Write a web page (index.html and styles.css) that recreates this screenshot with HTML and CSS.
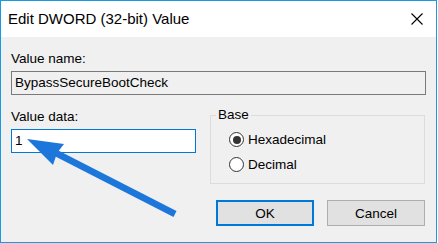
FILE: index.html
```html
<!DOCTYPE html>
<html>
<head>
<meta charset="utf-8">
<link rel="stylesheet" href="styles.css">
</head>
<body>
<div class="window">
  <div class="titlebar">
    <span class="title">Edit DWORD (32-bit) Value</span>
    <svg class="close" width="12" height="12" viewBox="0 0 12 12"><path d="M0.5 0.5 L11.5 11.5 M11.5 0.5 L0.5 11.5" stroke="#000" stroke-width="1.1" fill="none"/></svg>
  </div>
  <div class="content">
    <div class="label first">Value name:</div>
    <div class="textbox readonly">BypassSecureBootCheck</div>
    <div class="row">
      <div class="leftcol">
        <div class="label">Value data:</div>
        <div class="textbox active">1</div>
      </div>
      <fieldset class="group">
        <legend>Base</legend>
        <div class="radio"><span class="circle checked"></span><span>Hexadecimal</span></div>
        <div class="radio"><span class="circle"></span><span>Decimal</span></div>
      </fieldset>
    </div>
    <div class="buttons">
      <div class="btn default">OK</div>
      <div class="btn">Cancel</div>
    </div>
  </div>
  <svg class="arrow" width="438" height="243" viewBox="0 0 438 243">
    <polygon points="27,139 64,144 57,153 53,165" fill="#1d76d9"/>
    <line x1="52" y1="151" x2="175" y2="214" stroke="#1d76d9" stroke-width="6.5"/>
  </svg>
</div>
</body>
</html>
```
FILE: styles.css
```css
html, body {
  margin: 0;
  padding: 0;
  background: #ffffff;
}
body {
  font-family: "Liberation Sans", Arial, sans-serif;
  font-size: 13.5px;
  color: #000;
}
.window {
  position: relative;
  width: 437px;
  height: 243px;
  box-sizing: border-box;
  border: 1px solid #1c9ae0;
  background: #f0f0f0;
  display: flex;
  flex-direction: column;
}
.titlebar {
  height: 36px;
  background: #ffffff;
  display: flex;
  align-items: center;
  justify-content: space-between;
  padding-left: 7px;
  flex: none;
}
.title {
  font-size: 15px;
  line-height: 36px;
}
.close {
  margin-right: 13px;
}
.content {
  padding: 0 10px 0 10px;
  display: flex;
  flex-direction: column;
}
.label {
  line-height: 15px;
}
.label.first {
  margin-top: 14px;
}
.textbox {
  box-sizing: border-box;
  height: 24px;
  line-height: 22px;
  padding-left: 3px;
  margin-top: 5px;
  border: 1px solid #7a7a7a;
}
.textbox.readonly {
  background: #f0f0f0;
}
.textbox.active {
  background: #ffffff;
  border-color: #0078d7;
}
.row {
  display: flex;
  gap: 14px;
  margin-top: 14px;
}
.leftcol {
  width: 185px;
  display: flex;
  flex-direction: column;
}
.group {
  margin: -1px 0 0 0;
  padding: 10px 0 11px 18px;
  border: 1px solid #dcdcdc;
  width: 215px;
  box-sizing: border-box;
  display: flex;
  flex-direction: column;
  gap: 10px;
  min-inline-size: 0;
}
.group legend {
  padding: 0 2px;
  margin-left: -13px;
  line-height: 14px;
}
.radio {
  display: flex;
  align-items: center;
  height: 15px;
  line-height: 15px;
  gap: 4px;
}
.circle {
  width: 15px;
  height: 15px;
  box-sizing: border-box;
  border: 1px solid #333333;
  border-radius: 50%;
  background: #ffffff;
  display: flex;
  align-items: center;
  justify-content: center;
}
.circle.checked::after {
  content: "";
  width: 8px;
  height: 8px;
  border-radius: 50%;
  background: #333333;
}
.buttons {
  display: flex;
  justify-content: flex-end;
  gap: 13px;
  margin-top: 16px;
  margin-right: 1px;
}
.btn {
  width: 98px;
  height: 26px;
  box-sizing: border-box;
  border: 1px solid #adadad;
  background: #e1e1e1;
  display: flex;
  align-items: center;
  justify-content: center;
}
.btn.default {
  border: 2px solid #0078d7;
}
.arrow {
  position: absolute;
  left: -1px;
  top: -1px;
}
```
